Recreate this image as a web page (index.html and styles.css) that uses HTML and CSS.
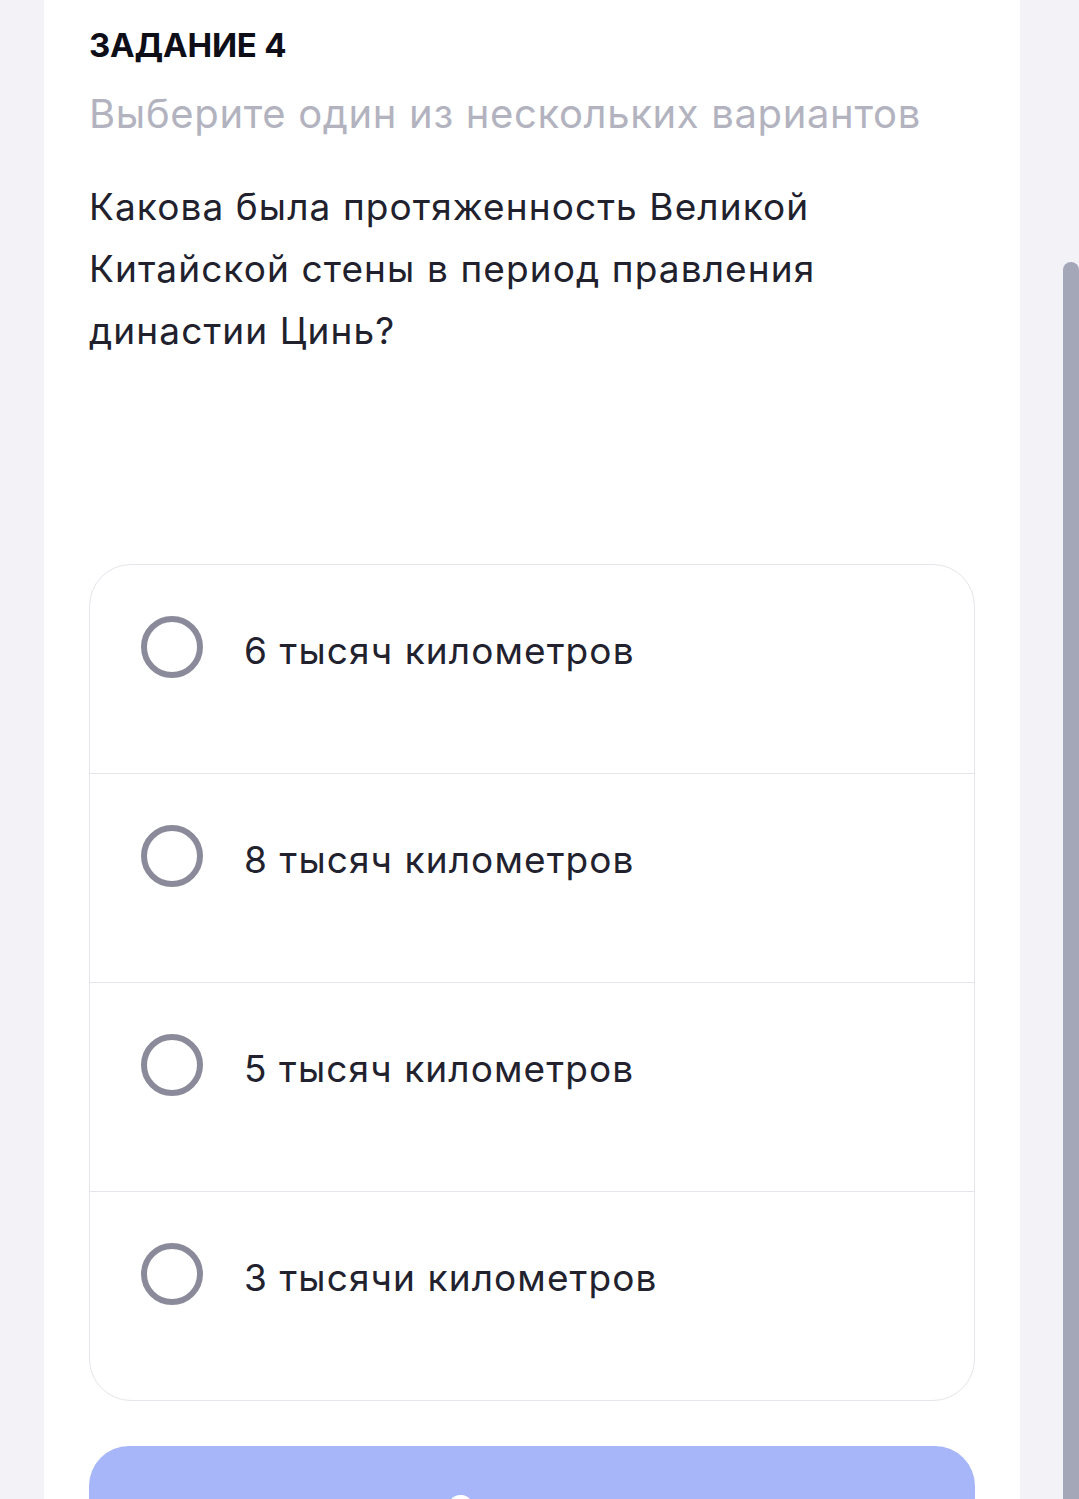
FILE: index.html
```html
<!DOCTYPE html>
<html lang="ru">
<head>
<meta charset="utf-8">
<title>Задание 4</title>
<link rel="stylesheet" href="styles.css">
</head>
<body>
<main class="card">
  <h1 class="task-title">ЗАДАНИЕ 4</h1>
  <p class="task-hint">Выберите один из нескольких вариантов</p>
  <p class="question">Какова была протяженность Великой Китайской стены в период правления династии Цинь?</p>
  <ul class="options">
    <li class="option"><span class="radio"></span><span class="option-text">6 тысяч километров</span></li>
    <li class="option"><span class="radio"></span><span class="option-text">8 тысяч километров</span></li>
    <li class="option"><span class="radio"></span><span class="option-text">5 тысяч километров</span></li>
    <li class="option"><span class="radio"></span><span class="option-text">3 тысячи километров</span></li>
  </ul>
  <button class="submit" type="button">Ответить</button>
</main>
<div class="scrollbar"></div>
</body>
</html>
```
FILE: styles.css
```css
html, body {
  margin: 0;
  padding: 0;
}
body {
  background: #f3f3f7;
  font-family: Inter, "Noto Sans", "Liberation Sans", sans-serif;
  overflow: hidden;
  height: 1499px;
}
.card {
  margin-left: 44px;
  width: 976px;
  box-sizing: border-box;
  background: #ffffff;
  padding: 23px 45px 0 45px;
  min-height: 1499px;
}
.task-title {
  margin: 0;
  font-size: 33px;
  line-height: 44px;
  font-weight: 700;
  color: #0e0e18;
  letter-spacing: -0.2px;
}
.task-hint {
  margin: 23px 0 0 0;
  font-size: 40px;
  line-height: 48px;
  color: #b3b3c0;
  font-weight: 400;
  letter-spacing: 0.65px;
}
.question {
  margin: 38px 0 0 0;
  font-size: 37px;
  line-height: 62px;
  color: #21212d;
  font-weight: 400;
  letter-spacing: 1.1px;
}
.options {
  list-style: none;
  margin: 202px 0 0 0;
  padding: 0;
  border: 1px solid #e5e5eb;
  border-radius: 42px;
  overflow: hidden;
}
.option {
  display: flex;
  align-items: flex-start;
  gap: 41px;
  padding: 51px 50px 91px 51px;
}
.option + .option {
  border-top: 1px solid #e5e5eb;
}
.radio {
  flex: none;
  width: 62px;
  height: 62px;
  box-sizing: border-box;
  border: 6px solid #8a8a9b;
  border-radius: 50%;
}
.option-text {
  font-size: 37px;
  line-height: 62px;
  padding-top: 4px;
  color: #22222f;
  letter-spacing: 1.1px;
}
.submit {
  display: block;
  width: 100%;
  margin-top: 45px;
  height: 124px;
  border: none;
  border-radius: 40px;
  background: #a6b6f8;
  color: #ffffff;
  font-family: Inter, "Noto Sans", "Liberation Sans", sans-serif;
  font-size: 37px;
  font-weight: 600;
}
.scrollbar {
  position: fixed;
  right: 0;
  top: 262px;
  width: 16px;
  height: 1300px;
  background: #a3a7b8;
  border-radius: 8px 8px 0 0;
}
```
